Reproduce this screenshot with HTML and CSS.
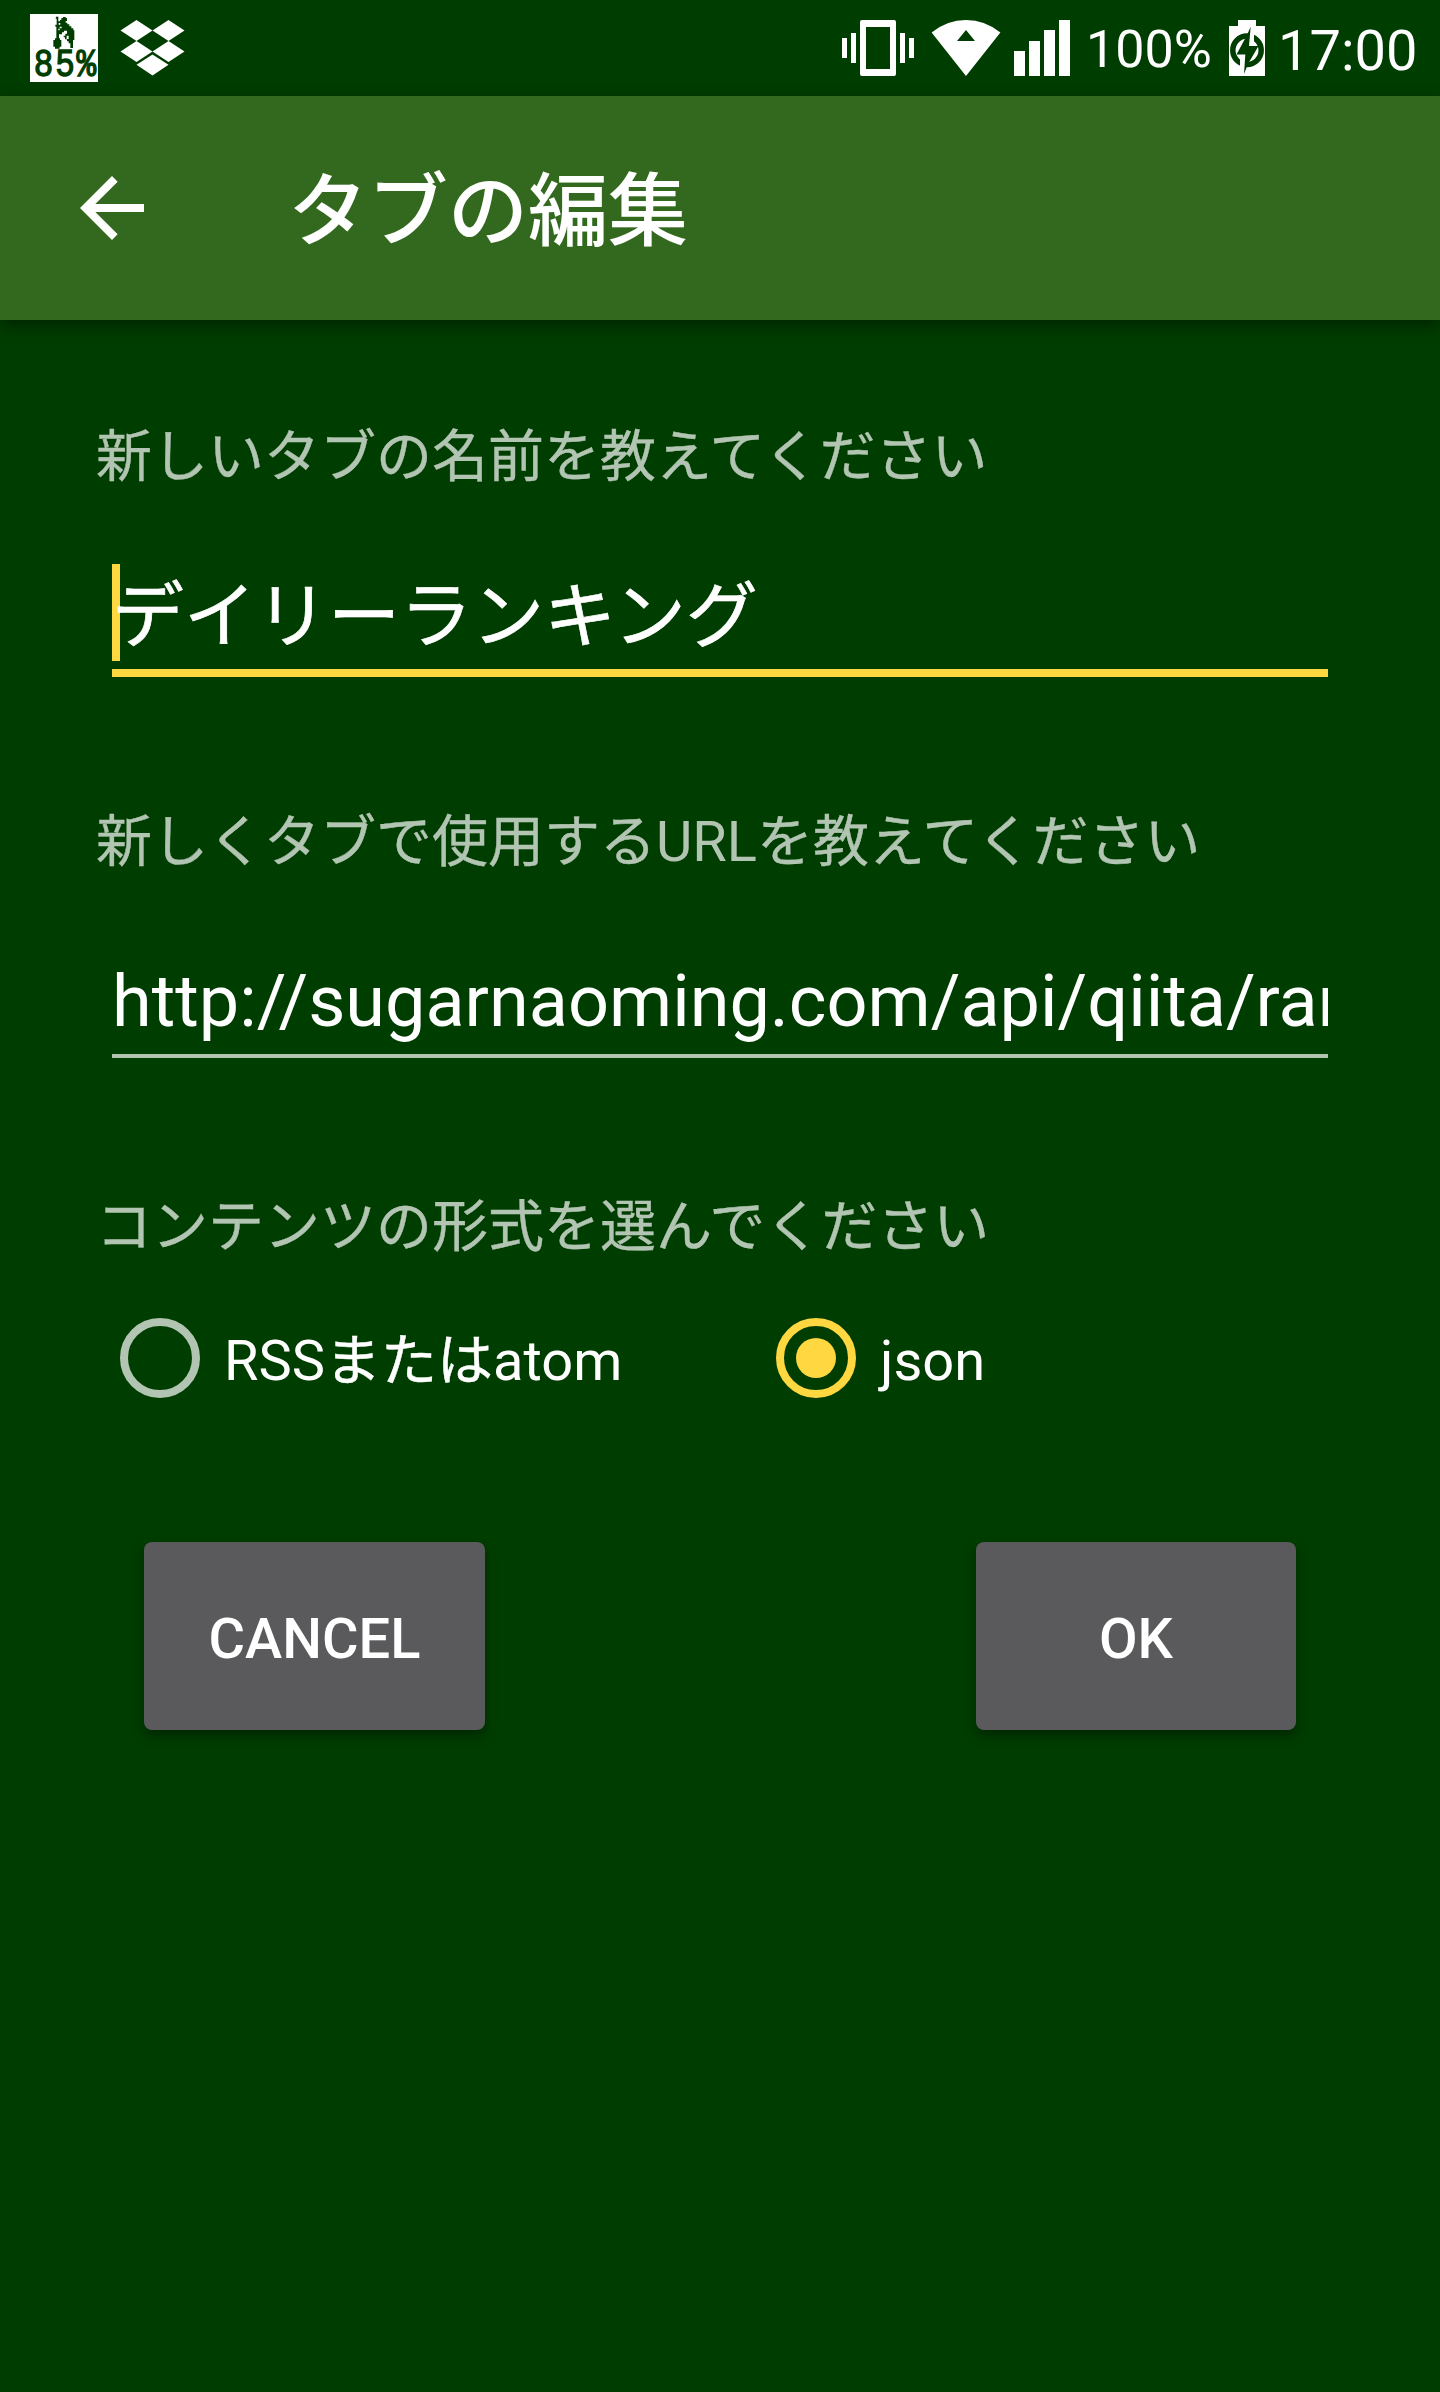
FILE: index.html
```html
<!DOCTYPE html>
<html lang="ja">
<head>
<meta charset="utf-8">
<title>タブの編集</title>
<link rel="stylesheet" href="styles.css">
</head>
<body>
<div class="status">
  <div class="status-left">
    <svg class="app-badge" width="68" height="68" viewBox="90 42 204 204">
      <path fill="#fff" d="M90 42h204v204H90z"/>
      <g fill="#003d00">
        <path d="M168 50h7v14h5v-4h4v-6h5v-3h8v3h4v9h-4v5h5v5h6v6h6v6h6v6h3v29h-4v24h-8v-14h-5v-6h-5v-6h-6v-6h-4v-5h5v-6h5v-9h-9v5h-6v6h-9v12h3v5h4v20h-5v6h-14v-6h-5v-20h5v-5h4V80h-3v-6h4V56h-3z"/>
        <path fill="#fff" d="M176 69h5v5h-5zM179 80h6v5h-6v6h-4v-5h4zM200 107h6v10h-6z"/>
      </g>
      <text class="badge-text" transform="scale(.85 1)" x="119.400 194.700 270" y="227">85%</text>
    </svg>
    <svg class="dropbox" width="66" height="56" viewBox="0 0 66 56">
      <path fill="#fff" d="M16.5 0 32.5 10.5 16.5 21 .5 10.5zM48.500 0l16 10.500-16 10.500-16-10.500zM16.500 21l16 10.500-16 10.500-16-10.500zM48.500 21l16 10.500-16 10.500-16-10.500zM32.500 34.500l16 10.200-16 10.800-16-10.800z"/>
    </svg>
  </div>
  <svg class="vibrate" width="72" height="56" viewBox="0 0 72 56" fill="#fff">
    <path d="M0 18h5v20H0zM9 13h5v30H9zM58 13h5v30h-5zM67 18h5v20h-5z"/>
    <path fill-rule="evenodd" d="M20 0h32a2 2 0 0 1 2 2v52a2 2 0 0 1-2 2H20a2 2 0 0 1-2-2V2a2 2 0 0 1 2-2zm4 7v42h24V7z"/>
  </svg>
  <svg class="wifi" width="70" height="56" viewBox="0 0 70 56">
    <path fill="#fff" fill-rule="evenodd" d="M.6 12.500Q16 0 35 0t34.400 12.500L35 56zM35 10l-9 11h18z"/>
  </svg>
  <svg class="signal" width="56" height="56" viewBox="0 0 56 56">
    <path fill="#fff" d="M0 31h11v25H0zM15 21h11v35H15zM30 10h11v46H30zM45 0h11v56H45z"/>
  </svg>
  <span class="percent">100%</span>
  <svg class="battery" width="36" height="56" viewBox="0 0 36 56">
    <path fill="#fff" d="M9 0h18v6h9v50H0V6h9z"/>
    <circle cx="18" cy="30.300" r="14.200" fill="none" stroke="#003d00" stroke-width="5.500"/>
    <path fill="#fff" d="M20 10h5v16h-5zM11 34h5v18h-5z"/>
    <path fill="#003d00" d="M21.700 6.700 20 26h9.500L19 44 15 54l1.300-19.500H7.500L17.500 16z"/>
  </svg>
  <span class="clock">17:00</span>
</div>
<header class="toolbar">
  <svg class="back" width="96" height="96" viewBox="0 0 24 24"><path fill="#fff" d="M20 11H7.830l5.590-5.590L12 4l-8 8 8 8 1.410-1.410L7.830 13H20z"/></svg>
  <h1 class="title">タブの編集</h1>
</header>
<main class="form">
  <div class="label">新しいタブの名前を教えてください</div>
  <div class="field field-active"><span class="caret"></span>デイリーランキング</div>
  <div class="label">新しくタブで使用する<span class="latin">URL</span>を教えてください</div>
  <div class="field field-url">http://sugarnaoming.com/api/qiita/ranking</div>
  <div class="label">コンテンツの形式を選んでください</div>
  <div class="radios">
    <div class="radio"><span class="ring"></span><span class="radio-text">RSS<span class="kana">または</span>atom</span></div>
    <div class="radio"><span class="ring checked"></span><span class="radio-text">json</span></div>
  </div>
  <div class="actions">
    <button class="btn cancel">CANCEL</button>
    <button class="btn ok">OK</button>
  </div>
</main>
</body>
</html>
```
FILE: styles.css
```css
* {
  box-sizing: border-box;
}

body {
  margin: 0;
  min-height: 2392px;
  background: #003d00;
  color: #fff;
  font-family: Roboto, "Noto Sans CJK JP", sans-serif;
}

.status {
  display: flex;
  align-items: flex-start;
  height: 96px;
  padding: 20px 0 0 30px;
  white-space: nowrap;
}

.status svg {
  display: block;
  flex: none;
}

.status-left {
  display: flex;
  width: 812px;
  gap: 22px;
}

.app-badge {
  margin-top: -6px;
}

.badge-text {
  font-family: "Liberation Mono", monospace;
  font-size: 115px;
  fill: #003d00;
  stroke: #003d00;
  stroke-width: 4px;
}

.wifi {
  margin-left: 17px;
}

.signal {
  margin-left: 13px;
}

.percent {
  width: 143px;
  margin-left: 16px;
  font-size: 52px;
  line-height: 60px;
}

.clock {
  margin-left: 13px;
  font-size: 56px;
  line-height: 62px;
}

.toolbar {
  display: flex;
  align-items: center;
  height: 224px;
  padding-left: 64px;
  background: #33691e;
  box-shadow: 0 6px 16px rgba(0, 0, 0, 0.4);
}

.title {
  margin: 7px 0 0 128px;
  font-size: 80px;
  font-weight: 500;
  line-height: 96px;
}

.form {
  padding: 104px 96px 0;
}

.label {
  color: #b2c5b2;
  font-size: 56px;
  line-height: 66px;
  white-space: nowrap;
  -webkit-text-stroke: 0.4px #b2c5b2;
}

.latin {
  -webkit-text-stroke: 0;
}

.field {
  position: relative;
  margin: 74px 16px 132px;
  height: 113px;
  padding-top: 4px;
  overflow: hidden;
  border-bottom: 8px solid #ffd740;
  font-size: 72px;
  line-height: 97px;
  white-space: nowrap;
}

.field-active {
  -webkit-text-stroke: 0.7px #fff;
}

.caret {
  position: absolute;
  left: 0;
  top: 0;
  z-index: -1;
  width: 8px;
  height: 97px;
  background: #ffd740;
}

.field-url {
  margin: 74px 16px 136px;
  height: 109px;
  padding-top: 4px;
  border-bottom: 4px solid #b2c5b2;
}

.radios {
  display: flex;
  padding: 58px 0 0 24px;
}

.radio {
  display: flex;
  align-items: center;
  width: 656px;
  height: 80px;
  font-size: 56px;
  white-space: nowrap;
}

.radio:last-child {
  width: auto;
}

.radio-text {
  padding-top: 6px;
  line-height: 66px;
}

.kana {
  -webkit-text-stroke: 0.5px #fff;
}

.ring {
  flex: none;
  display: flex;
  width: 80px;
  height: 80px;
  margin-right: 24px;
  border: 8px solid #b2c5b2;
  border-radius: 50%;
}

.checked {
  border-color: #ffd740;
}

.checked::after {
  content: "";
  width: 40px;
  height: 40px;
  margin: auto;
  border-radius: 50%;
  background: #ffd740;
}

.actions {
  display: flex;
  justify-content: space-between;
  padding: 144px 48px 0;
}

.btn {
  height: 188px;
  padding: 6px 0 0;
  border: 0;
  border-radius: 8px;
  background: #5a5a5c;
  color: #fff;
  box-shadow: 0 6px 12px rgba(0, 0, 0, 0.35);
  font-family: Roboto, sans-serif;
  font-size: 56px;
  font-weight: 500;
}

.cancel {
  width: 341px;
}

.ok {
  width: 320px;
}
```
